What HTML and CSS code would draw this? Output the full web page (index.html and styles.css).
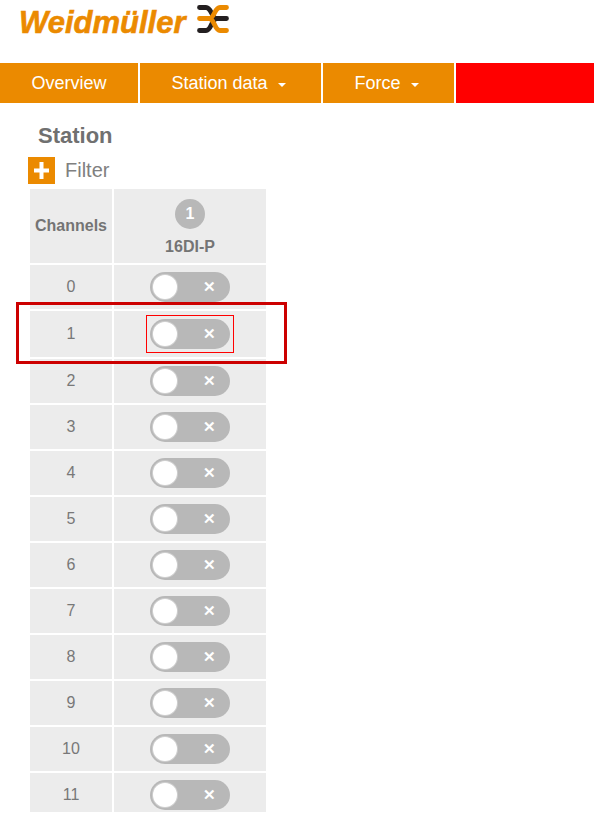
FILE: index.html
```html
<!DOCTYPE html>
<html lang="en">
<head>
  <meta charset="UTF-8" />
  <meta name="viewport" content="width=device-width, initial-scale=1.0"/>
  <title>Station</title>
  <link rel="stylesheet" href="styles.css">
</head>
<body>
  <header class="top">
    <span class="brand">Weidmüller</span>
    <svg class="mark" width="32" height="28" viewBox="0 0 32 28" fill="none" stroke-width="4.800" stroke-linecap="round">
      <path stroke="#231f20" d="M2.500 2.500H9C14.500 2.500 14.500 13.500 20 13.500H29.500M2.500 25.500H9C14.500 25.500 14.500 13.500 20 13.500"/>
      <path stroke="#eb8a00" d="M29.500 2.500H23C17.500 2.500 17.500 13.500 12 13.500H2.500M29.500 25.500H23C17.500 25.500 17.500 13.500 12 13.500"/>
    </svg>
  </header>

  <nav class="menu">
    <a class="menu-item item-overview">Overview</a>
    <a class="menu-item item-data">Station data <i class="caret"></i></a>
    <a class="menu-item item-force">Force <i class="caret"></i></a>
    <a class="menu-item item-alert"></a>
  </nav>

  <main class="content">
    <h2 class="title">Station</h2>
    <div class="filter">
      <span class="filter-btn">
        <svg width="15" height="17" viewBox="0 0 15 17"><path fill="#fff" d="M5.500 0h4v6.500H15v4H9.500V17h-4v-6.500H0v-4h5.500z"/></svg>
      </span>
      <span class="filter-label">Filter</span>
    </div>

    <div class="table-wrap">
      <div class="table">
        <div class="cell head">Channels</div>
        <div class="cell head module">
          <span class="badge">1</span>
          <span class="module-name">16DI-P</span>
        </div>

        <div class="cell">0</div>
        <div class="cell"><span class="toggle"><i class="knob"></i><i class="cross">✕</i></span></div>
        <div class="cell">1</div>
        <div class="cell"><span class="focus-box"><span class="toggle"><i class="knob"></i><i class="cross">✕</i></span></span></div>
        <div class="cell">2</div>
        <div class="cell"><span class="toggle"><i class="knob"></i><i class="cross">✕</i></span></div>
        <div class="cell">3</div>
        <div class="cell"><span class="toggle"><i class="knob"></i><i class="cross">✕</i></span></div>
        <div class="cell">4</div>
        <div class="cell"><span class="toggle"><i class="knob"></i><i class="cross">✕</i></span></div>
        <div class="cell">5</div>
        <div class="cell"><span class="toggle"><i class="knob"></i><i class="cross">✕</i></span></div>
        <div class="cell">6</div>
        <div class="cell"><span class="toggle"><i class="knob"></i><i class="cross">✕</i></span></div>
        <div class="cell">7</div>
        <div class="cell"><span class="toggle"><i class="knob"></i><i class="cross">✕</i></span></div>
        <div class="cell">8</div>
        <div class="cell"><span class="toggle"><i class="knob"></i><i class="cross">✕</i></span></div>
        <div class="cell">9</div>
        <div class="cell"><span class="toggle"><i class="knob"></i><i class="cross">✕</i></span></div>
        <div class="cell">10</div>
        <div class="cell"><span class="toggle"><i class="knob"></i><i class="cross">✕</i></span></div>
        <div class="cell">11</div>
        <div class="cell"><span class="toggle"><i class="knob"></i><i class="cross">✕</i></span></div>
      </div>
    </div>
    <div class="highlight"></div>
  </main>
</body>
</html>
```

FILE: styles.css
```css
body { font-family: "Liberation Sans", Arial, sans-serif; margin: 0; background: #fff; color: #747474; overflow: hidden; }

.top { display: flex; align-items: flex-start; height: 63px; padding-left: 19px; box-sizing: border-box; }
.brand {
  margin-top: 6px;
  margin-right: 11px;
  font-size: 31px;
  line-height: 33px;
  font-weight: bold;
  font-style: italic;
  color: #eb8a00;
  -webkit-text-stroke: 0.6px #eb8a00;
}
.mark { margin-top: 5px; }

.menu { display: flex; gap: 2px; height: 40px; }
.menu-item {
  display: flex;
  align-items: center;
  justify-content: center;
  background: #eb8a00;
  color: #fff;
  font-size: 18px;
}
.item-overview { width: 138px; }
.item-data { width: 181px; padding-right: 4px; box-sizing: border-box; }
.item-force { width: 131px; padding-right: 4px; box-sizing: border-box; }
.item-alert { flex: 1; background: #f00; }
.caret {
  width: 0;
  height: 0;
  margin-left: 10px;
  margin-top: 3px;
  border-left: 4px solid transparent;
  border-right: 4px solid transparent;
  border-top: 4px solid #fff;
}

.content { position: relative; padding: 20px 0 0 28px; }
.title { margin: 0 0 0 10px; font-size: 22px; line-height: 26px; font-weight: bold; color: #707070; }
.filter { display: flex; align-items: center; gap: 10px; height: 27px; margin-top: 8px; }
.filter-btn { display: flex; align-items: center; justify-content: center; width: 27px; height: 27px; background: #eb8a00; }
.filter-label { font-size: 20px; color: #808080; }

.table-wrap { height: 623px; margin: 5px 0 0 2px; overflow: hidden; }
.table { display: grid; grid-template-columns: 82px 152px; gap: 2px; width: 236px; }
.cell {
  display: flex;
  align-items: center;
  justify-content: center;
  box-sizing: border-box;
  min-height: 44px;
  padding: 4px 0;
  background: #ececec;
  font-size: 16px;
  color: #787878;
}
.head { min-height: 74px; padding: 0; font-weight: bold; color: #747474; }
.module { flex-direction: column; justify-content: flex-start; padding-top: 10px; }
.badge {
  width: 30px;
  height: 30px;
  margin-bottom: 9px;
  border-radius: 50%;
  background: #b8b8b8;
  color: #fff;
  line-height: 30px;
  text-align: center;
}
.module-name { line-height: 18px; }

.toggle {
  display: flex;
  align-items: center;
  justify-content: space-between;
  width: 80px;
  height: 30px;
  border-radius: 15px;
  background: #b8b8b8;
}
.knob { width: 24px; height: 24px; margin-left: 3px; border-radius: 50%; background: #fff; box-shadow: 0 0 0 1px #cfcfcf; }
.cross { margin-right: 14px; color: #fff; font-style: normal; font-size: 15px; font-weight: bold; }
.focus-box { padding: 3px; border: 1px solid #f00; }

.highlight {
  position: absolute;
  left: 16px;
  top: 199px;
  box-sizing: border-box;
  width: 271px;
  height: 62px;
  border: 3px solid #c00;
  pointer-events: none;
}
```
